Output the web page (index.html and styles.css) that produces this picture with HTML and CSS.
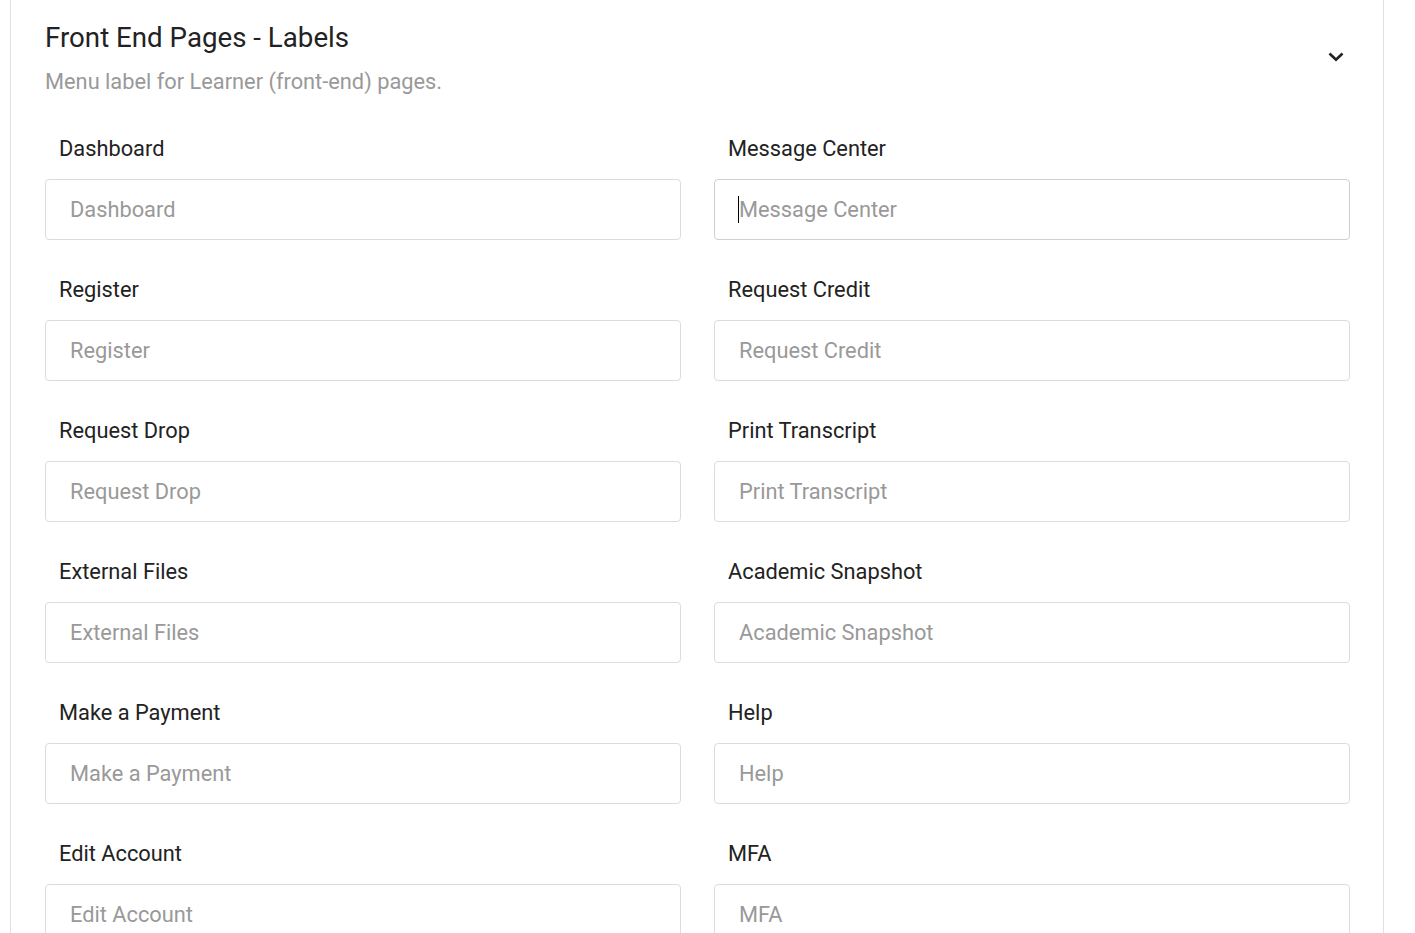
FILE: index.html
```html
<!DOCTYPE html>
<html lang="en">
<head>
    <meta charset="UTF-8">
    <meta name="viewport" content="width=device-width, initial-scale=1.0">
    <title>Front End Pages - Labels</title>
    <link rel="stylesheet" href="styles.css">
</head>
<body>
    <section class="card">
        <header class="card-header">
            <div>
                <h2 class="card-title">Front End Pages - Labels</h2>
                <p class="card-subtitle">Menu label for Learner (front-end) pages.</p>
            </div>
            <button class="toggle" type="button" aria-label="Collapse">
                <svg width="16" height="10" viewBox="0 0 16 10">
                    <path d="M1.5 1.5 L8 7.8 L14.5 1.5" fill="none" stroke="#222" stroke-width="2.6"/>
                </svg>
            </button>
        </header>

        <div class="fields">
            <div class="field">
                <label for="f-dashboard">Dashboard</label>
                <input id="f-dashboard" type="text" placeholder="Dashboard">
            </div>
            <div class="field">
                <label for="f-message">Message Center</label>
                <div class="input-wrap">
                    <input id="f-message" type="text" placeholder="Message Center">
                    <span class="caret"></span>
                </div>
            </div>
            <div class="field">
                <label for="f-register">Register</label>
                <input id="f-register" type="text" placeholder="Register">
            </div>
            <div class="field">
                <label for="f-credit">Request Credit</label>
                <input id="f-credit" type="text" placeholder="Request Credit">
            </div>
            <div class="field">
                <label for="f-drop">Request Drop</label>
                <input id="f-drop" type="text" placeholder="Request Drop">
            </div>
            <div class="field">
                <label for="f-transcript">Print Transcript</label>
                <input id="f-transcript" type="text" placeholder="Print Transcript">
            </div>
            <div class="field">
                <label for="f-files">External Files</label>
                <input id="f-files" type="text" placeholder="External Files">
            </div>
            <div class="field">
                <label for="f-snapshot">Academic Snapshot</label>
                <input id="f-snapshot" type="text" placeholder="Academic Snapshot">
            </div>
            <div class="field">
                <label for="f-payment">Make a Payment</label>
                <input id="f-payment" type="text" placeholder="Make a Payment">
            </div>
            <div class="field">
                <label for="f-help">Help</label>
                <input id="f-help" type="text" placeholder="Help">
            </div>
            <div class="field">
                <label for="f-account">Edit Account</label>
                <input id="f-account" type="text" placeholder="Edit Account">
            </div>
            <div class="field">
                <label for="f-mfa">MFA</label>
                <input id="f-mfa" type="text" placeholder="MFA">
            </div>
        </div>
    </section>
</body>
</html>
```

FILE: styles.css
```css
:root {
    --text-color: #222;
    --muted-color: #999;
    --border-color: #dcdcdc;
    --card-border: #e0e0e0;
}

* {
    box-sizing: border-box;
    margin: 0;
    padding: 0;
}

body {
    font-family: Roboto, "Liberation Sans", Arial, sans-serif;
    color: var(--text-color);
    background: #fff;
    padding-left: 10px;
    overflow: hidden;
}

/* card, scrolled so its top edge is out of view */
.card {
    width: 1374px;
    border-left: 1px solid var(--card-border);
    border-right: 1px solid var(--card-border);
    padding: 20px 33px 40px 34px;
}

.card-header {
    display: flex;
    justify-content: space-between;
    align-items: center;
}

.card-title {
    font-size: 27.7px;
    font-weight: 400;
    line-height: 36px;
}

.card-subtitle {
    font-size: 21.8px;
    line-height: 30px;
    margin-top: 11px;
    color: var(--muted-color);
}

.toggle {
    border: none;
    background: none;
    display: flex;
    margin: -4px 6px 0 0;
    cursor: pointer;
}

.fields {
    display: grid;
    grid-template-columns: 1fr 1fr;
    column-gap: 33px;
    margin-top: 2px;
}

.field {
    display: flex;
    flex-direction: column;
    padding-top: 35px;
}

.field label {
    font-size: 21.8px;
    line-height: 30px;
    padding-left: 14px;
    margin-bottom: 15px;
}

.input-wrap {
    position: relative;
}

.field input {
    width: 100%;
    height: 61px;
    border: 1px solid var(--border-color);
    border-radius: 4px;
    padding: 0 24px;
    font-family: inherit;
    font-size: 21.8px;
    color: var(--text-color);
    outline: none;
}

.field input::placeholder {
    color: var(--muted-color);
}

.input-wrap input {
    border-color: #cfcfcf;
}

/* text caret of the focused field */
.caret {
    position: absolute;
    left: 24px;
    top: 17px;
    width: 1px;
    height: 27px;
    background: #000;
}
```
